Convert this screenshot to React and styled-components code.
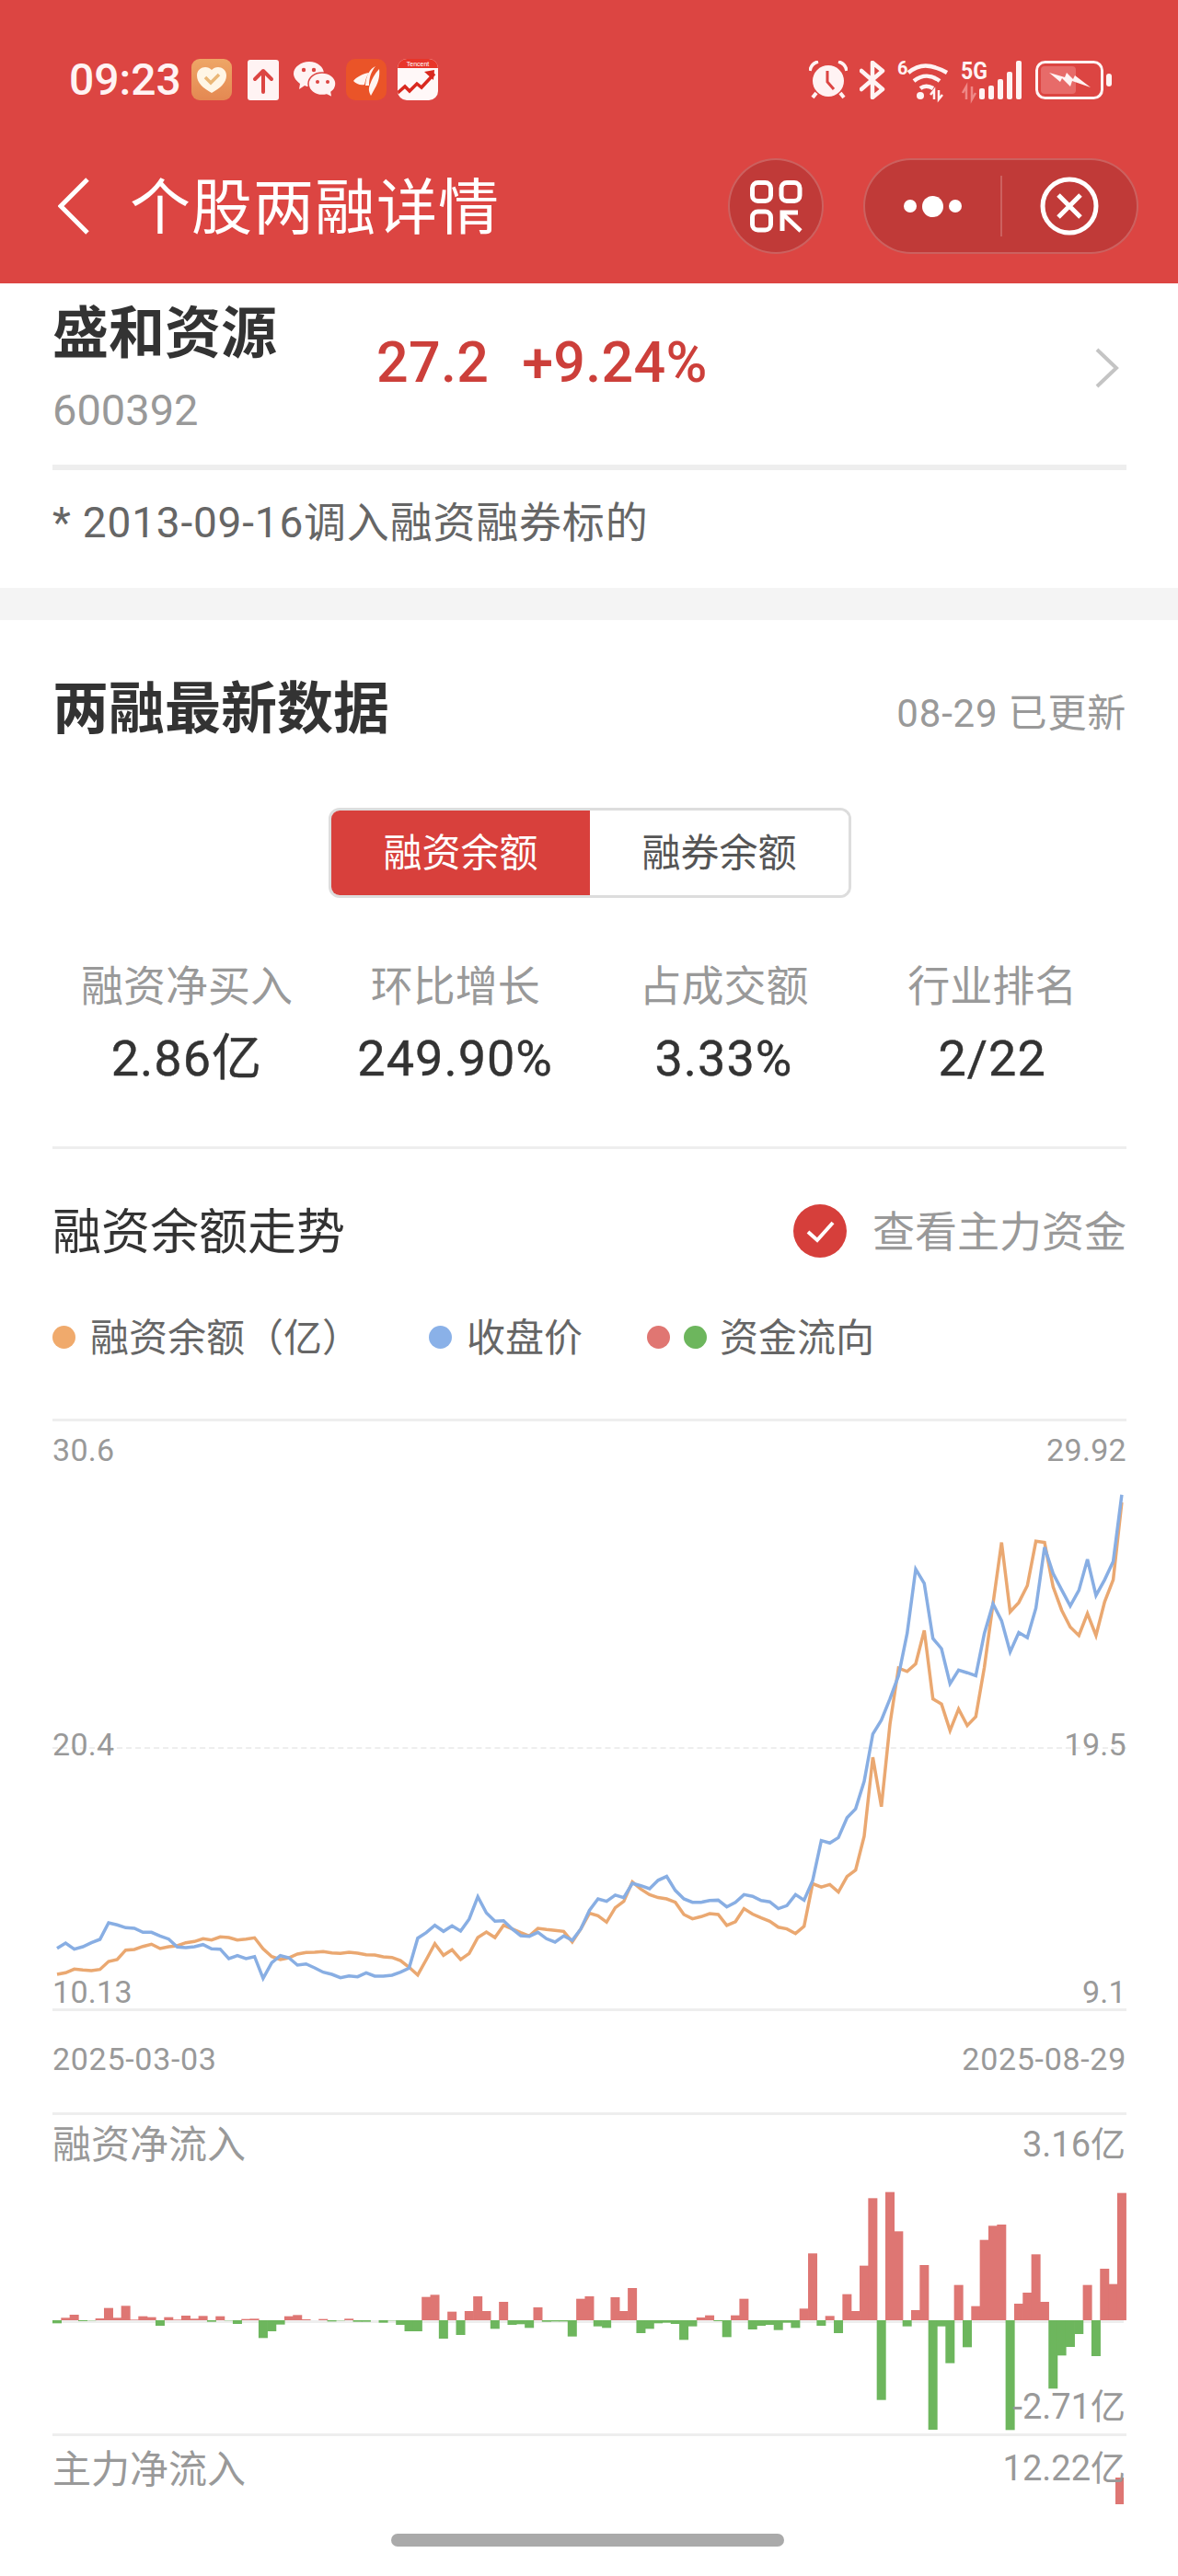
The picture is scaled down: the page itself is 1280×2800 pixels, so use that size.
import React from "react";
import styled, { createGlobalStyle } from "styled-components";

const GlobalStyle = createGlobalStyle`
  html, body {
    margin: 0;
    padding: 0;
    background: #fff;
  }
  body {
    font-family: Roboto, "Noto Sans CJK SC", sans-serif;
  }
  * {
    box-sizing: border-box;
  }
`

const Page = styled.div`
  position: relative;
  width: 1280px;
  height: 2800px;
  overflow: hidden;
  background: #fff;
`

const Header = styled.header`
  height: 308px;
  padding-top: 64px;
  background: #dc4542;
  color: #fff;
`

const StatusBar = styled.div`
  display: flex;
  align-items: center;
  justify-content: space-between;
  height: 45px;
  padding: 0 72px 0 75px;
`

const StatusGroup = styled.div`
  display: flex;
  align-items: center;
  gap: ${p => p.$gap || 0}px;
`

const Time = styled.span`
  width: 127px;
  font-size: 48px;
  font-weight: 500;
  line-height: 45px;
  color: #fff3f3;
`

const IconSlot = styled.span`
  display: flex;
  justify-content: center;
  width: 56px;
`

const GlyphText = styled.text`
  font-family: Roboto, sans-serif;
  font-weight: 700;
  fill: #fff3f3;
`

const NavBar = styled.nav`
  display: flex;
  align-items: center;
  height: 104px;
  margin-top: 63px;
  padding: 0 43px 0 63px;
`

const NavTitle = styled.h1`
  flex: 1;
  margin: 0 0 0 44px;
  padding-top: 5px;
  font-size: 66px;
  font-weight: 400;
  line-height: 80px;
  letter-spacing: 1px;
  white-space: nowrap;
`

const RoundButton = styled.div`
  display: flex;
  align-items: center;
  justify-content: center;
  width: 104px;
  height: 104px;
  margin-right: 43px;
  border: 2px solid rgba(255, 255, 255, .2);
  border-radius: 52px;
  background: #c03a38;
`

const Capsule = styled.div`
  display: flex;
  align-items: center;
  width: 299px;
  height: 104px;
  border: 2px solid rgba(255, 255, 255, .2);
  border-radius: 52px;
  background: #c03a38;
`

const CapsulePart = styled.div`
  display: flex;
  flex: 1;
  align-items: center;
  justify-content: center;
  gap: 6px;
  height: 66px;
  border-left: ${p => p.$split ? "2px solid rgba(255, 255, 255, .2)" : "none"};
`

const Dot = styled.span`
  width: ${p => p.$big ? 23 : 14}px;
  height: ${p => p.$big ? 23 : 14}px;
  border-radius: 50%;
  background: #fff;
`

const StockBlock = styled.section`
  height: 331px;
  padding: 20px 56px 0 57px;
`

const StockRow = styled.div`
  display: flex;
  height: 183px;
  border-bottom: 6px solid #eee;
`

const StockName = styled.div`
  width: 352px;
`

const NameText = styled.div`
  font-size: 61px;
  font-weight: 700;
  line-height: 70px;
  color: #333;
`

const CodeText = styled.div`
  margin-top: 20px;
  font-size: 47px;
  line-height: 56px;
  color: #999;
`

const Quote = styled.div`
  display: flex;
  flex: 1;
  gap: 36px;
  height: 90px;
  margin-top: 21px;
  font-size: 61px;
  font-weight: 500;
  line-height: 90px;
  letter-spacing: .3px;
  color: #cc3f3a;
`

const Chevron = styled.svg`
  margin: 50px 8px 0 0;
`

const NoteText = styled.div`
  margin-top: 32px;
  font-size: 46px;
  line-height: 50px;
  letter-spacing: .8px;
  white-space: nowrap;
  color: #666;
`

const Band = styled.div`
  height: 35px;
  background: #f4f4f4;
`

const DataSection = styled.section`
  padding: 67px 56px 0 57px;
`

const SectionHead = styled.div`
  display: flex;
  align-items: center;
  justify-content: space-between;
  height: 60px;
`

const SectionTitle = styled.h2`
  margin: 0;
  font-size: 61px;
  font-weight: 700;
  line-height: 60px;
  color: #333;
`

const UpdatedText = styled.span`
  font-size: 42px;
  letter-spacing: .8px;
  color: #999;
`

const Tabs = styled.div`
  display: flex;
  width: 568px;
  height: 98px;
  margin: 77px 0 0 300px;
  overflow: hidden;
  border: 3px solid #ddd;
  border-radius: 12px;
`

const Tab = styled.div`
  display: flex;
  align-items: center;
  justify-content: center;
  flex: 1;
  padding-bottom: 8px;
  font-size: 42px;
  color: ${p => p.$active ? "#fff" : "#555"};
  background: ${p => p.$active ? "#d8403c" : "#fff"};
`

const Stats = styled.div`
  display: grid;
  grid-template-columns: repeat(4, 1fr);
  height: 208px;
  margin-top: 65px;
  border-bottom: 3px solid #eee;
`

const Stat = styled.div`
  text-align: center;
`

const StatLabel = styled.div`
  padding-top: 1px;
  font-size: 46px;
  line-height: 60px;
  color: #999;
`

const StatValue = styled.div`
  margin-top: 19px;
  font-size: 54px;
  font-weight: 400;
  line-height: 60px;
  letter-spacing: 1px;
  color: #333;
  -webkit-text-stroke: .4px #333;
`

const TrendHead = styled(SectionHead)`
  margin-top: 59px;
`

const TrendTitle = styled.h3`
  margin: 0;
  padding-top: 4px;
  font-size: 53px;
  font-weight: 400;
  line-height: 60px;
  color: #333;
`

const MainFund = styled.div`
  display: flex;
  align-items: center;
  gap: 28px;
  font-size: 46px;
  color: #999;
`

const MainFundText = styled.span`
  padding-bottom: 6px;
`

const Legend = styled.div`
  display: flex;
  align-items: center;
  height: 50px;
  margin-top: 60px;
  font-size: 42px;
  color: #666;
`

const LegendDot = styled.span`
  flex: none;
  width: 25px;
  height: 25px;
  margin-right: ${p => p.$mr}px;
  border-radius: 50%;
  background: ${p => p.$color};
`

const LegendText = styled.span`
  width: ${p => p.$w}px;
  padding-bottom: 6px;
  white-space: nowrap;
`

const LineChart = styled.div`
  position: relative;
  height: 644px;
  margin-top: 64px;
  border-top: 3px solid #eee;
  border-bottom: 3px solid #eee;
`

const MidLine = styled.div`
  position: absolute;
  left: 0;
  right: 0;
  top: 354px;
  border-top: 2px dashed #eee;
`

const Axis = styled.span`
  position: absolute;
  ${p => p.$right ? "right: 0;" : "left: 0;"}
  top: ${p => p.$top}px;
  font-size: 34px;
  line-height: 40px;
  letter-spacing: .3px;
  color: #999;
`

const PlotSvg = styled.svg`
  position: absolute;
  left: 0;
  top: -3px;
`

const DateRow = styled.div`
  display: flex;
  justify-content: space-between;
  height: 44px;
  margin-top: 30px;
  font-size: 34px;
  line-height: 44px;
  letter-spacing: .7px;
  color: #999;
`

const FlowChart = styled.div`
  position: relative;
  height: ${p => p.$h}px;
  margin-top: ${p => p.$mt || 0}px;
  border-top: 3px solid #eee;
`

const FlowLabel = styled.span`
  position: absolute;
  left: 0;
  top: ${p => p.$top}px;
  font-size: 42px;
  line-height: 40px;
  color: #999;
`

const FlowValue = styled.span`
  position: absolute;
  right: 1px;
  top: ${p => p.$top}px;
  font-size: 38px;
  line-height: 40px;
  color: #999;
  white-space: nowrap;
`

const LastBar = styled.div`
  position: absolute;
  right: 3px;
  top: 45px;
  width: 9px;
  height: 29px;
  background: #de7673;
`

const HomeIndicator = styled.div`
  position: absolute;
  left: 425px;
  top: 2754px;
  width: 427px;
  height: 14px;
  border-radius: 7px;
  background: #aaa;
`

// 读图得到的折线数据,前半段和后半段分开量的
const blueA = [653,636,656,648,635,624,570,577,586,588,601,601,613,623,649,651,648,641,655,656,687,677,687,680,751,700,677,684,708,704,717,731,738,749,743,746,733,744,744,741,731,718,620,602,578,598,580,597,558,485,538,565,563,590,612,614,601,622,633,613,627,590]
const orangeA = [738,733,721,724,726,722,696,690,659,657,647,640,654,648,645,635,631,622,626,616,618,626,623,619,655,680,690,684,672,667,666,664,668,670,666,669,674,675,681,683,693,715,740,690,638,676,658,690,670,618,600,618,578,590,602,613,588,592,595,598,632,590]
const blueB = [1255,1228,1234,1219,1225,1191,1197,1204,1184,1175,1208,1228,1236,1236,1232,1231,1247,1236,1218,1222,1232,1235,1251,1244,1218,1231,1185,1090,1096,1083,1036,1015,950,838,805,755,700,600,448,482,612,636,719,687,693,700,600,530,570,644,598,610,540,396,458,497,535,498,425,510,473,430,272]
const orangeB = [1262,1268,1283,1249,1234,1188,1205,1218,1225,1228,1236,1265,1275,1270,1263,1265,1291,1282,1251,1264,1273,1281,1295,1299,1310,1293,1192,1200,1194,1212,1175,1160,1080,893,1010,815,682,690,672,593,755,767,830,779,818,797,680,530,385,549,527,487,382,385,490,545,585,605,553,605,525,473,290]

const flows = [-10,8,18,-3,-1,6,40,8,47,2,13,10,-18,10,2,15,5,14,-5,13,-1,-12,4,5,-58,-36,-14,13,17,3,0,4,-4,-1,5,-5,-5,0,-8,-1,-15,-36,-36,76,83,-60,28,-48,30,78,30,-28,60,-15,-13,-25,42,-5,-4,-4,-53,70,78,-20,-25,75,30,105,-42,-28,-10,-8,-12,-64,-20,9,16,-3,-55,16,70,-30,-18,-15,-32,-8,-25,38,218,-18,14,-42,85,30,178,398,-260,418,290,-20,33,180,-357,-20,-140,115,-88,46,262,308,312,-358,54,90,215,60,-223,-115,-87,-45,115,-117,168,118,415]

const STEP = 9.33
const toPoints = (a, b) => {
    const ys = [...a.map(y => 1900 + y / 3), ...b.map(y => 1542 + (y - 92) * 0.4595)]
    return ys.map((y, i) => `${(5 + STEP * i).toFixed(1)},${(y - 1542).toFixed(1)}`).join(" ")
}

const HeartIcon = () => (
    <svg width="44" height="45" viewBox="0 0 44 45">
        <defs>
            <linearGradient id="hg" x1="0" y1="0" x2="0" y2="1">
                <stop offset="0" stopColor="#eea666" />
                <stop offset="1" stopColor="#e48852" />
            </linearGradient>
        </defs>
        <rect width="44" height="45" rx="9" fill="url(#hg)" />
        <path d="M22 37C13 32 6 26 6 18c0-6 5-9 9-9 3 0 5 1 7 3 2-2 4-3 7-3 4 0 9 3 9 9 0 8-7 14-16 19z" fill="#fff6e6" />
        <path d="M15 20l6 6 9-9" fill="none" stroke="#eab777" strokeWidth="3.5" />
    </svg>
)

const UploadIcon = () => (
    <svg width="34" height="44" viewBox="0 0 34 44">
        <rect width="34" height="44" rx="3" fill="#fff3f3" />
        <path d="M17 35V12M8 21l9-9 9 9" fill="none" stroke="#dc4542" strokeWidth="4" strokeLinecap="round" strokeLinejoin="round" />
    </svg>
)

const WechatIcon = () => (
    <svg width="46" height="40" viewBox="0 0 46 40">
        <path d="M17 0c9 0 16 6 16 13 0 8-7 14-16 14-2 0-3 0-5-1l-6 4 1-6C3 21 0 17 0 13 0 6 8 0 17 0z" fill="#fff3f3" />
        <path d="M31 12c8 0 15 5 15 12 0 4-2 7-5 9l1 6-6-3c-2 .5-3 .6-5 .6-8 0-15-5.500-15-12.600S23 12 31 12z" fill="#fff3f3" stroke="#dc4542" strokeWidth="1.500" />
        <circle cx="11" cy="9" r="2.200" fill="#dc4542" />
        <circle cx="22" cy="9" r="2.200" fill="#dc4542" />
        <circle cx="26" cy="22" r="2" fill="#dc4542" />
        <circle cx="37" cy="22" r="2" fill="#dc4542" />
    </svg>
)

const FlushIcon = () => (
    <svg width="44" height="45" viewBox="0 0 44 45">
        <rect width="44" height="45" rx="10" fill="#ea5428" />
        <path d="M8 24c3-4 10-8 17-9-3 4-4 9-5 13-5 1-9-1-12-4z" fill="#fff5f0" />
        <path d="M32 8c-6 3-10 9-11 21l4 0c0-8 2-15 7-21z" fill="#fff5f0" />
        <path d="M36 11c1 7-1 14-3 18l-6 11c-2-4-3-7-1-12 2-6 5-12 10-17z" fill="#fff5f0" />
    </svg>
)

const TencentIcon = () => (
    <svg width="44" height="45" viewBox="0 0 44 45">
        <clipPath id="tc"><rect width="44" height="45" rx="10" /></clipPath>
        <g clipPath="url(#tc)">
            <rect width="44" height="45" fill="#fff8f8" />
            <rect width="44" height="10" fill="#e8352a" />
            <text x="22" y="8" fontSize="7" fill="#fff" textAnchor="middle" fontFamily="Liberation Sans">Tencent</text>
            <path d="M0 37l8-7 5 5 8-8 5 4 14-15" fill="none" stroke="#d9291f" strokeWidth="3.500" />
            <path d="M29 14l11-2-1 11z" fill="#d9291f" />
        </g>
    </svg>
)

const AlarmIcon = () => (
    <svg width="42" height="42" viewBox="0 0 42 42">
        <circle cx="21" cy="22" r="17" fill="#fff3f3" />
        <path d="M1 11C2 5 6 2 10 1M41 11C40 5 36 2 32 1" fill="none" stroke="#fff3f3" strokeWidth="3.500" />
        <path d="M8 35l-4 5M34 35l4 5" stroke="#fff3f3" strokeWidth="4" />
        <path d="M20 11v12l7 8" fill="none" stroke="#dc4542" strokeWidth="3" />
    </svg>
)

const BluetoothIcon = () => (
    <svg width="28" height="42" viewBox="0 0 28 42">
        <path d="M2 11l23 20-11 9V2l11 9L2 31" fill="none" stroke="#fff3f3" strokeWidth="4.500" strokeLinejoin="round" strokeLinecap="round" />
    </svg>
)

const WifiIcon = () => (
    <svg width="56" height="44" viewBox="0 0 56 44" overflow="visible">
        <GlyphText x="0" y="16" fontSize="20">6</GlyphText>
        <path d="M12 14C24 4 36 4 54 14M18 23c9-7 19-7 28 0M25 31c4-3 9-3 14 0" fill="none" stroke="#fff3f3" strokeWidth="4.500" />
        <circle cx="25" cy="39" r="4" fill="#fff3f3" />
        <path d="M40 43V33l-4 5M45 33v10l4-5" fill="none" stroke="#fff3f3" strokeWidth="2.500" />
    </svg>
)

const SignalIcon = () => (
    <svg width="68" height="44" viewBox="0 0 68 44" overflow="visible">
        <GlyphText x="0" y="21" fontSize="25" textLength="29" lengthAdjust="spacingAndGlyphs">5G</GlyphText>
        <path d="M6 43V29l-4 7M12 29v14l4-7" fill="none" stroke="#ee8886" strokeWidth="2.500" />
        <rect x="20" y="31" width="6" height="12" rx="2" fill="#fff3f3" />
        <rect x="30" y="28" width="6" height="15" rx="2" fill="#fff3f3" />
        <rect x="40" y="21" width="6" height="22" rx="2" fill="#fff3f3" />
        <rect x="50" y="13" width="6" height="30" rx="2" fill="#fff3f3" />
        <rect x="60" y="1" width="6" height="42" rx="2" fill="#fff3f3" />
    </svg>
)

const BatteryIcon = () => (
    <svg width="83" height="42" viewBox="0 0 83 42">
        <rect x="1.500" y="1.500" width="71" height="39" rx="9" fill="none" stroke="#fff3f3" strokeWidth="3" />
        <rect x="6" y="6" width="38" height="30" rx="4" fill="#e76b69" />
        <path d="M15 13l17 5 2-5 7 7 2-4 17 13-20-7-2 6-9-9-2 4z" fill="#fff3f3" />
        <rect x="77" y="14" width="6" height="14" rx="3" fill="#fff3f3" />
    </svg>
)

const CollectIcon = () => (
    <svg width="57" height="57" viewBox="0 0 57 57">
        <g fill="none" stroke="#fff" strokeWidth="5">
            <rect x="2.500" y="2.500" width="20" height="20" rx="6" />
            <rect x="34" y="2.500" width="20" height="20" rx="6" />
            <rect x="2.500" y="34" width="20" height="20" rx="6" />
            <path d="M55 55L36 37" strokeWidth="4.500" />
            <path d="M52 35H35v20" />
        </g>
    </svg>
)

const CloseIcon = () => (
    <svg width="64" height="64" viewBox="0 0 64 64">
        <circle cx="32" cy="32" r="29" fill="none" stroke="#fff" strokeWidth="5" />
        <path d="M20 20l24 24M44 20L20 44" stroke="#fff" strokeWidth="5" />
    </svg>
)

const BackIcon = () => (
    <svg width="34" height="62" viewBox="0 0 34 62">
        <path d="M32 2L3 31l29 29" fill="none" stroke="#fff" strokeWidth="5" />
    </svg>
)

const CheckBadge = () => (
    <svg width="58" height="58" viewBox="0 0 58 58">
        <circle cx="29" cy="29" r="29" fill="#d63f3b" />
        <path d="M16 30l10 9 17-19" fill="none" stroke="#fff" strokeWidth="4" />
    </svg>
)

const stats = [
    {label: "融资净买入", value: "2.86亿"},
    {label: "环比增长", value: "249.90%"},
    {label: "占成交额", value: "3.33%"},
    {label: "行业排名", value: "2/22"},
]

export default function App() {
    return (
        <Page>
            <GlobalStyle />
            <Header>
                <StatusBar>
                    <StatusGroup>
                        <Time>09:23</Time>
                        <IconSlot><HeartIcon /></IconSlot>
                        <IconSlot><UploadIcon /></IconSlot>
                        <IconSlot><WechatIcon /></IconSlot>
                        <IconSlot><FlushIcon /></IconSlot>
                        <IconSlot><TencentIcon /></IconSlot>
                    </StatusGroup>
                    <StatusGroup $gap={13}>
                        <AlarmIcon />
                        <BluetoothIcon />
                        <WifiIcon />
                        <SignalIcon />
                        <BatteryIcon />
                    </StatusGroup>
                </StatusBar>
                <NavBar>
                    <BackIcon />
                    <NavTitle>个股两融详情</NavTitle>
                    <RoundButton><CollectIcon /></RoundButton>
                    <Capsule>
                        <CapsulePart>
                            <Dot /><Dot $big /><Dot />
                        </CapsulePart>
                        <CapsulePart $split><CloseIcon /></CapsulePart>
                    </Capsule>
                </NavBar>
            </Header>

            <StockBlock>
                <StockRow>
                    <StockName>
                        <NameText>盛和资源</NameText>
                        <CodeText>600392</CodeText>
                    </StockName>
                    <Quote>
                        <span>27.2</span>
                        <span>+9.24%</span>
                    </Quote>
                    <Chevron width="27" height="44" viewBox="0 0 27 44">
                        <path d="M3 2l21 20L3 42" fill="none" stroke="#c4c4c4" strokeWidth="4" />
                    </Chevron>
                </StockRow>
                <NoteText>* 2013-09-16调入融资融券标的</NoteText>
            </StockBlock>
            <Band />

            <DataSection>
                <SectionHead>
                    <SectionTitle>两融最新数据</SectionTitle>
                    <UpdatedText>08-29 已更新</UpdatedText>
                </SectionHead>
                <Tabs>
                    <Tab $active>融资余额</Tab>
                    <Tab>融券余额</Tab>
                </Tabs>
                <Stats>
                    {stats.map(s => (
                        <Stat key={s.label}>
                            <StatLabel>{s.label}</StatLabel>
                            <StatValue>{s.value}</StatValue>
                        </Stat>
                    ))}
                </Stats>
                <TrendHead>
                    <TrendTitle>融资余额走势</TrendTitle>
                    <MainFund><CheckBadge /><MainFundText>查看主力资金</MainFundText></MainFund>
                </TrendHead>
                <Legend>
                    <LegendDot $color="#f0aa6c" $mr={16} />
                    <LegendText $w={368}>融资余额（亿）</LegendText>
                    <LegendDot $color="#8ab1e8" $mr={16} />
                    <LegendText $w={196}>收盘价</LegendText>
                    <LegendDot $color="#e07672" $mr={15} />
                    <LegendDot $color="#6db65d" $mr={14} />
                    <LegendText>资金流向</LegendText>
                </Legend>

                <LineChart>
                    <MidLine />
                    <PlotSvg width="1167" height="644" viewBox="0 0 1167 644">
                        <polyline points={toPoints(orangeA, orangeB)} fill="none" stroke="#eaa871" strokeWidth="3.500" />
                        <polyline points={toPoints(blueA, blueB)} fill="none" stroke="#88aee3" strokeWidth="3.500" />
                    </PlotSvg>
                    <Axis $top={11}>30.6</Axis>
                    <Axis $right $top={11}>29.92</Axis>
                    <Axis $top={331}>20.4</Axis>
                    <Axis $right $top={331}>19.5</Axis>
                    <Axis $top={600}>10.13</Axis>
                    <Axis $right $top={600}>9.1</Axis>
                </LineChart>
                <DateRow>
                    <span>2025-03-03</span>
                    <span>2025-08-29</span>
                </DateRow>

                <FlowChart $h={349} $mt={36}>
                    <PlotSvg width="1167" height="349" viewBox="0 0 1167 349">
                        <rect x="0" y="226" width="1164" height="3" fill="#eee" />
                        {flows.map((v, i) => (
                            <rect
                                key={i}
                                x={STEP * i}
                                y={v > 0 ? 226 - v / 3 : 226}
                                width="10"
                                height={Math.abs(v) / 3}
                                fill={v > 0 ? "#de7673" : "#6db65d"}
                            />
                        ))}
                    </PlotSvg>
                    <FlowLabel $top={13}>融资净流入</FlowLabel>
                    <FlowValue $top={12}>3.16亿</FlowValue>
                    <FlowValue $top={297}>-2.71亿</FlowValue>
                </FlowChart>
                <FlowChart $h={154}>
                    <LastBar />
                    <FlowLabel $top={17}>主力净流入</FlowLabel>
                    <FlowValue $top={15}>12.22亿</FlowValue>
                </FlowChart>
            </DataSection>
            <HomeIndicator />
        </Page>
    )
}
